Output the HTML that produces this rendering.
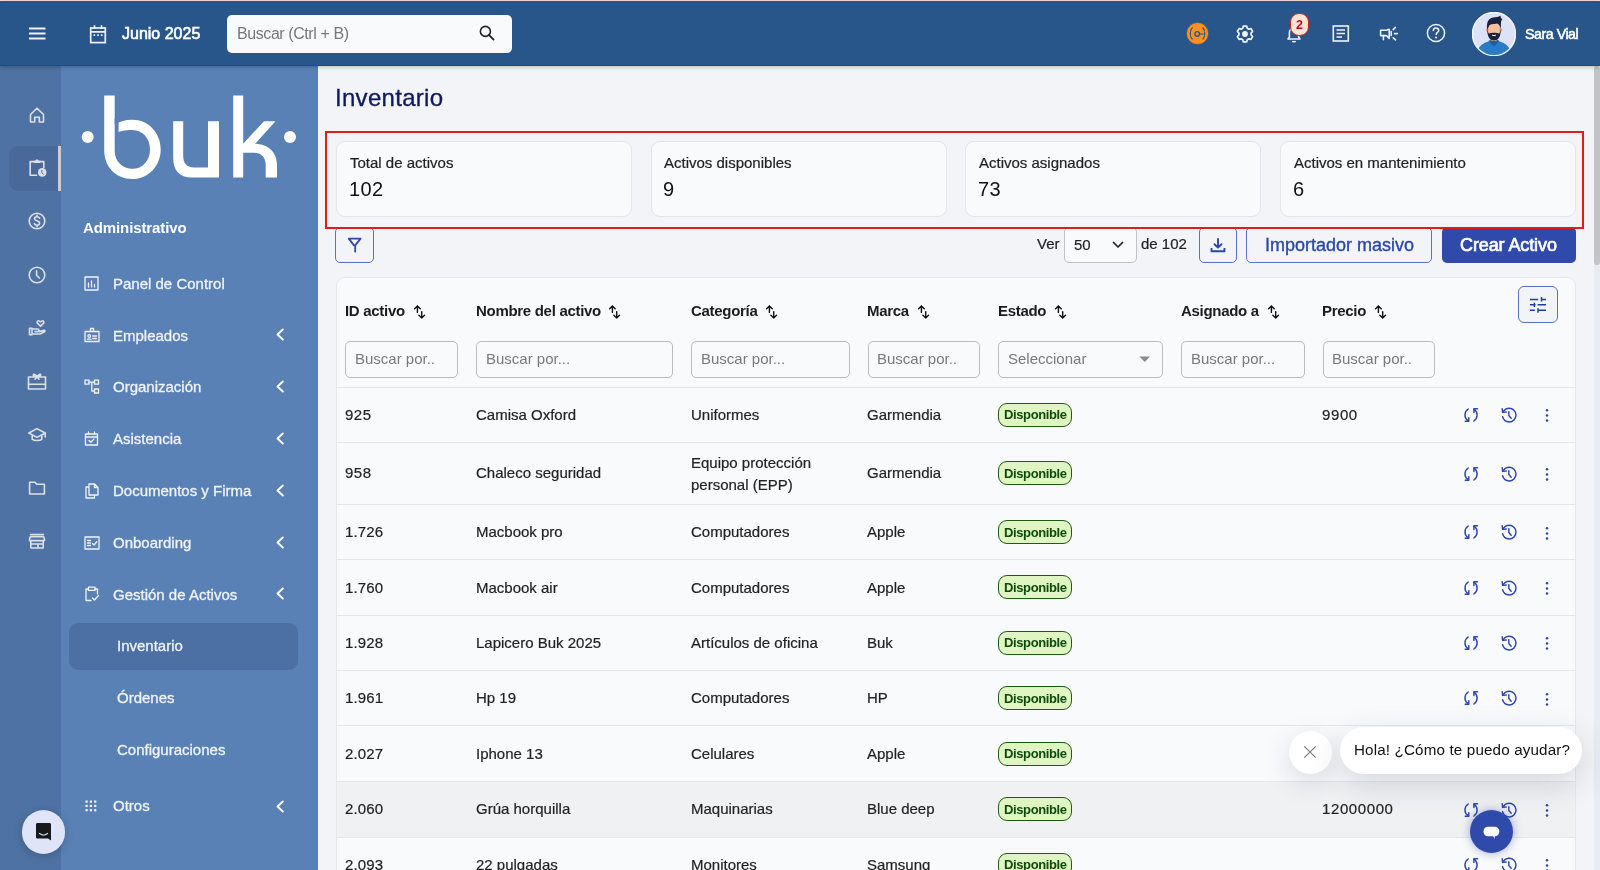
<!DOCTYPE html><html lang="es"><head><meta charset="utf-8"><title>Inventario</title><style>
*{margin:0;padding:0;box-sizing:border-box}
html,body{width:1600px;height:870px;overflow:hidden;background:#f3f4f7;font-family:"Liberation Sans",sans-serif;-webkit-font-smoothing:antialiased}
.a{position:absolute}
.t{position:absolute;line-height:1;white-space:nowrap;will-change:transform}
.d{-webkit-text-stroke:0.2px #222}
</style></head><body>
<div class="a" style="left:318.00px;top:65.00px;width:1276.00px;height:805.00px;background:#f3f4f7"></div>
<div class="a" style="left:1594.00px;top:65.00px;width:6.00px;height:805.00px;background:#e9ebf3"></div>
<div class="a" style="left:1594.00px;top:66.00px;width:6.00px;height:199.00px;background:#c3c4c8;border-radius:3px"></div>
<div class="a" style="left:0.00px;top:65.00px;width:61.00px;height:805.00px;background:#4e72a3"></div>
<div class="a" style="left:61.00px;top:65.00px;width:257.00px;height:805.00px;background:#5981b6"></div>
<div class="a" style="left:9.00px;top:146.00px;width:49.00px;height:44.80px;background:#48699a;border-radius:9px 0 0 9px"></div>
<div class="a" style="left:57.80px;top:146.00px;width:3.20px;height:44.80px;background:#cbcdd2"></div>
<svg class="a" style="left:27.00px;top:105.00px;overflow:visible" width="20" height="20" viewBox="0 0 20 20"><path fill="none" stroke="#dde0e7" stroke-width="1.6" stroke-linecap="round" stroke-linejoin="round" d="M3.5 9.5 L10 3.2 L16.5 9.5 V17 H12.3 V12.2 H7.7 V17 H3.5 Z"/></svg>
<svg class="a" style="left:27.00px;top:158.00px;overflow:visible" width="20" height="20" viewBox="0 0 20 20"><path fill="none" stroke="#dde0e7" stroke-width="1.6" stroke-linecap="round" stroke-linejoin="round" d="M9.6 17.2 H3.2 V3.6 H6.8 M13.4 3.6 H16.8 V9.4" stroke-linecap="butt" stroke-linejoin="miter"/><path d="M6.8 2.6 H8.6 C8.8 1.2 11.2 1.2 11.4 2.6 H13.4 V5 H6.8 Z" fill="#dde0e7"/><circle cx="15.2" cy="14.4" r="4.3" fill="#dde0e7"/><path d="M14.9 11.9 V14.6 L16.4 16.4" stroke="#4a6a98" stroke-width="1" fill="none"/></svg>
<svg class="a" style="left:27.00px;top:211.00px;overflow:visible" width="20" height="20" viewBox="0 0 20 20"><circle cx="10" cy="10" r="7.8" fill="none" stroke="#dde0e7" stroke-width="1.6" stroke-linecap="round" stroke-linejoin="round"/><path fill="none" stroke="#dde0e7" stroke-width="1.6" stroke-linecap="round" stroke-linejoin="round" d="M12.6 7.2 C12 6 10.9 5.8 10 5.8 C8.6 5.8 7.5 6.6 7.5 7.8 C7.5 10.3 12.6 9.4 12.6 12.1 C12.6 13.4 11.4 14.2 10 14.2 C8.8 14.2 7.8 13.8 7.3 12.7 M10 4.3 V5.8 M10 14.2 V15.7"/></svg>
<svg class="a" style="left:27.00px;top:264.60px;overflow:visible" width="20" height="20" viewBox="0 0 20 20"><circle cx="10" cy="10" r="7.8" fill="none" stroke="#dde0e7" stroke-width="1.6" stroke-linecap="round" stroke-linejoin="round"/><path fill="none" stroke="#dde0e7" stroke-width="1.6" stroke-linecap="round" stroke-linejoin="round" d="M9.6 5.8 V10.3 L12.4 13"/></svg>
<svg class="a" style="left:27.00px;top:318.40px;overflow:visible" width="20" height="20" viewBox="0 0 20 20"><path fill="none" stroke="#dde0e7" stroke-width="1.6" stroke-linecap="round" stroke-linejoin="round" d="M13.5 8.2 L10.6 5.4 C9.6 4.4 10.1 2.7 11.5 2.7 C12.4 2.7 13 3.4 13.5 4 C14 3.4 14.6 2.7 15.5 2.7 C16.9 2.7 17.4 4.4 16.4 5.4 Z"/><path fill="none" stroke="#dde0e7" stroke-width="1.6" stroke-linecap="round" stroke-linejoin="round" d="M2.5 10.2 H5 V16.8 H2.5 Z M5 11 H10.5 C11.5 11 12 11.6 12 12.4 C12 13.2 11.5 13.6 10.5 13.6 H8 M5 16 H13 L17.6 13.8 C18.2 13.3 17.9 12.3 17 12.4 L12 13.6"/></svg>
<svg class="a" style="left:27.00px;top:370.70px;overflow:visible" width="20" height="20" viewBox="0 0 20 20"><rect x="1.5" y="6" width="17" height="12" fill="none" stroke="#dde0e7" stroke-width="1.6" stroke-linecap="round" stroke-linejoin="round"/><path fill="none" stroke="#dde0e7" stroke-width="1.6" stroke-linecap="round" stroke-linejoin="round" d="M1.5 13.2 H18.5 M10 6 C8.5 3.2 6.5 2.6 6.3 4 C6.2 5 8 5.8 10 6 C11.5 3.2 13.5 2.6 13.7 4 C13.8 5 12 5.8 10 6 M10 6 L8 8.2 M10 6 L12 8.2"/></svg>
<svg class="a" style="left:27.00px;top:424.50px;overflow:visible" width="20" height="20" viewBox="0 0 20 20"><path fill="none" stroke="#dde0e7" stroke-width="1.6" stroke-linecap="round" stroke-linejoin="round" d="M1.8 8 L10 3.6 L18.2 8 L10 12.4 Z M5.2 10 V14.2 C6.8 16 13.2 16 14.8 14.2 V10 M18.2 8 V12"/></svg>
<svg class="a" style="left:27.00px;top:477.70px;overflow:visible" width="20" height="20" viewBox="0 0 20 20"><path fill="none" stroke="#dde0e7" stroke-width="1.6" stroke-linecap="round" stroke-linejoin="round" d="M2.6 4.2 H8 L9.8 6.2 H17.4 V16 H2.6 Z"/></svg>
<svg class="a" style="left:27.00px;top:530.60px;overflow:visible" width="20" height="20" viewBox="0 0 20 20"><path fill="none" stroke="#dde0e7" stroke-width="1.6" stroke-linecap="round" stroke-linejoin="round" d="M3.5 3.5 H16.5 M2.5 8 L3.5 5.6 H16.5 L17.5 8 V9.6 H2.5 Z M3.8 9.6 V17 H16.2 V9.6 M3.8 13 H11 V17 M11 13 H16.2"/></svg>
<svg class="a" style="left:70.00px;top:80.00px;" width="240" height="110" viewBox="0 0 240 110">
<circle cx="17.7" cy="57" r="6" fill="#fff"/>
<circle cx="220" cy="57" r="6" fill="#fff"/>
<path d="M34.2 15.5 H44.7 V44.5 C49.5 41.2 55.5 39.7 62.4 39.7 C78.5 39.7 90.7 53 90.7 69.4 C90.7 85.8 78.5 99 62.4 99 C46 99 34.2 87 34.2 70 Z" fill="#fff"/>
<path d="M44.7 53.8 C48.5 51.2 55 50 62.4 50 C72.5 50 80 58.5 80 69.4 C80 80.3 72.5 88.8 62.4 88.8 C52.5 88.8 44.7 81.5 44.7 71 Z" fill="#5981b6"/>
<path d="M44.7 38 H48.6 V53.8 H44.7 Z" fill="#5981b6"/>
<path d="M103.2 41.2 H113.2 V76 C113.2 83 116.5 87.4 124 87.4 H138 V41.2 H149 V97.5 H122 C109 97.5 103.2 90 103.2 78 Z" fill="#fff"/>
<rect x="163.2" y="15.5" width="10" height="82" fill="#fff"/>
<path d="M173.2 63.7 L194 41.2 H205.5 L184.5 64.5 L173.2 72.7 Z" fill="#fff"/>
<path d="M173.2 63.7 H184 C198 63.7 207 72 207 85 V97.5 H195.7 V85 C195.7 77 191 72.7 184 72.7 H173.2 Z" fill="#fff"/>
</svg>
<div class="t " style="left:82.62px;top:219.70px;font-size:15px;font-weight:700;color:#fff;letter-spacing:-0.1px;">Administrativo</div>
<svg class="a" style="left:84.00px;top:275.50px;overflow:visible" width="16" height="16" viewBox="0 0 16 16"><rect x="1" y="1" width="13" height="13" fill="none" stroke="#f2f4f8" stroke-width="1.3" stroke-linejoin="round" stroke-linecap="round"/><path fill="none" stroke="#f2f4f8" stroke-width="1.3" stroke-linejoin="round" stroke-linecap="round" d="M4.5 11 V7 M7.5 11 V5 M10.5 11 V8.5"/></svg>
<div class="t " style="left:113.22px;top:275.80px;font-size:15px;color:#f1f3f7;-webkit-text-stroke:0.3px #f1f3f7;">Panel de Control</div>
<svg class="a" style="left:84.00px;top:327.30px;overflow:visible" width="16" height="16" viewBox="0 0 16 16"><rect x="1" y="4.5" width="14" height="10" fill="none" stroke="#f2f4f8" stroke-width="1.3" stroke-linejoin="round" stroke-linecap="round"/><path fill="none" stroke="#f2f4f8" stroke-width="1.3" stroke-linejoin="round" stroke-linecap="round" d="M6.5 4.5 V1.5 H9.5 V4.5 M3.5 12.2 H7 M8.8 9 H12.5 M8.8 11.5 H12.5"/><circle cx="5.2" cy="9" r="1.3" fill="none" stroke="#f2f4f8" stroke-width="1.3" stroke-linejoin="round" stroke-linecap="round"/></svg>
<div class="t " style="left:113.22px;top:327.60px;font-size:15px;color:#f1f3f7;-webkit-text-stroke:0.3px #f1f3f7;">Empleados</div>
<svg class="a" style="left:275.00px;top:328.30px;" width="10" height="13" viewBox="0 0 10 13"><path d="M7.8 1.5 L2.5 6.5 L7.8 11.5" fill="none" stroke="#fff" stroke-width="1.9" stroke-linecap="round" stroke-linejoin="round"/></svg>
<svg class="a" style="left:84.00px;top:379.10px;overflow:visible" width="16" height="16" viewBox="0 0 16 16"><rect x="1" y="1.2" width="4" height="4" fill="none" stroke="#f2f4f8" stroke-width="1.3" stroke-linejoin="round" stroke-linecap="round"/><rect x="10.5" y="1.2" width="4" height="4" fill="none" stroke="#f2f4f8" stroke-width="1.3" stroke-linejoin="round" stroke-linecap="round"/><rect x="10.5" y="10" width="4" height="4" fill="none" stroke="#f2f4f8" stroke-width="1.3" stroke-linejoin="round" stroke-linecap="round"/><path fill="none" stroke="#f2f4f8" stroke-width="1.3" stroke-linejoin="round" stroke-linecap="round" d="M5 3.2 H10.5 M7.8 3.2 V12 H10.5"/></svg>
<div class="t " style="left:113.22px;top:379.40px;font-size:15px;color:#f1f3f7;-webkit-text-stroke:0.3px #f1f3f7;">Organización</div>
<svg class="a" style="left:275.00px;top:380.10px;" width="10" height="13" viewBox="0 0 10 13"><path d="M7.8 1.5 L2.5 6.5 L7.8 11.5" fill="none" stroke="#fff" stroke-width="1.9" stroke-linecap="round" stroke-linejoin="round"/></svg>
<svg class="a" style="left:84.00px;top:430.90px;overflow:visible" width="16" height="16" viewBox="0 0 16 16"><rect x="1.5" y="3" width="12" height="11" fill="none" stroke="#f2f4f8" stroke-width="1.3" stroke-linejoin="round" stroke-linecap="round"/><path fill="none" stroke="#f2f4f8" stroke-width="1.3" stroke-linejoin="round" stroke-linecap="round" d="M1.5 6 H13.5 M4.5 1 V3 M10.5 1 V3 M5 9.5 L6.8 11.2 L10 8"/></svg>
<div class="t " style="left:113.22px;top:431.20px;font-size:15px;color:#f1f3f7;-webkit-text-stroke:0.3px #f1f3f7;">Asistencia</div>
<svg class="a" style="left:275.00px;top:431.90px;" width="10" height="13" viewBox="0 0 10 13"><path d="M7.8 1.5 L2.5 6.5 L7.8 11.5" fill="none" stroke="#fff" stroke-width="1.9" stroke-linecap="round" stroke-linejoin="round"/></svg>
<svg class="a" style="left:84.00px;top:482.70px;overflow:visible" width="16" height="16" viewBox="0 0 16 16"><path fill="none" stroke="#f2f4f8" stroke-width="1.3" stroke-linejoin="round" stroke-linecap="round" d="M5 1 H10.5 L14 4.5 V12 H5 Z M10.5 1 V4.5 H14 M5 4 H2 V15 H10.5 V12"/></svg>
<div class="t " style="left:113.22px;top:483.00px;font-size:15px;color:#f1f3f7;-webkit-text-stroke:0.3px #f1f3f7;">Documentos y Firma</div>
<svg class="a" style="left:275.00px;top:483.70px;" width="10" height="13" viewBox="0 0 10 13"><path d="M7.8 1.5 L2.5 6.5 L7.8 11.5" fill="none" stroke="#fff" stroke-width="1.9" stroke-linecap="round" stroke-linejoin="round"/></svg>
<svg class="a" style="left:84.00px;top:534.50px;overflow:visible" width="16" height="16" viewBox="0 0 16 16"><rect x="1" y="2" width="14" height="12" fill="none" stroke="#f2f4f8" stroke-width="1.3" stroke-linejoin="round" stroke-linecap="round"/><path fill="none" stroke="#f2f4f8" stroke-width="1.3" stroke-linejoin="round" stroke-linecap="round" d="M3.5 5.5 H6.5 M3.5 8 H6.5 M3.5 10.5 H6.5 M8.5 8.5 L10 10 L12.8 6.8"/></svg>
<div class="t " style="left:113.22px;top:534.80px;font-size:15px;color:#f1f3f7;-webkit-text-stroke:0.3px #f1f3f7;">Onboarding</div>
<svg class="a" style="left:275.00px;top:535.50px;" width="10" height="13" viewBox="0 0 10 13"><path d="M7.8 1.5 L2.5 6.5 L7.8 11.5" fill="none" stroke="#fff" stroke-width="1.9" stroke-linecap="round" stroke-linejoin="round"/></svg>
<svg class="a" style="left:84.00px;top:586.30px;overflow:visible" width="16" height="16" viewBox="0 0 16 16"><path fill="none" stroke="#f2f4f8" stroke-width="1.3" stroke-linejoin="round" stroke-linecap="round" d="M4.5 3 H2 V14.5 H7 M11 3 H13.5 V8"/><rect x="4.5" y="1.2" width="6.5" height="3.2" fill="none" stroke="#f2f4f8" stroke-width="1.3" stroke-linejoin="round" stroke-linecap="round"/><path fill="none" stroke="#f2f4f8" stroke-width="1.3" stroke-linejoin="round" stroke-linecap="round" d="M8.5 12 L10.5 14 L14.5 9.5"/></svg>
<div class="t " style="left:113.22px;top:586.60px;font-size:15px;color:#f1f3f7;-webkit-text-stroke:0.3px #f1f3f7;">Gestión de Activos</div>
<svg class="a" style="left:275.00px;top:587.30px;" width="10" height="13" viewBox="0 0 10 13"><path d="M7.8 1.5 L2.5 6.5 L7.8 11.5" fill="none" stroke="#fff" stroke-width="1.9" stroke-linecap="round" stroke-linejoin="round"/></svg>
<div class="a" style="left:69.20px;top:623.00px;width:228.50px;height:47.00px;background:#4c70a4;border-radius:9px"></div>
<div class="t " style="left:117.33px;top:638.30px;font-size:15px;color:#f1f3f7;-webkit-text-stroke:0.3px #f1f3f7;">Inventario</div>
<div class="t " style="left:117.33px;top:690.10px;font-size:15px;color:#f1f3f7;-webkit-text-stroke:0.3px #f1f3f7;">Órdenes</div>
<div class="t " style="left:117.33px;top:741.90px;font-size:15px;color:#f1f3f7;-webkit-text-stroke:0.3px #f1f3f7;">Configuraciones</div>
<svg class="a" style="left:85.00px;top:800.00px;" width="13" height="13" viewBox="0 0 13 13"><rect x="0.5" y="0.5" width="2.2" height="2.2" fill="#f2f4f8"/><rect x="0.5" y="4.8" width="2.2" height="2.2" fill="#f2f4f8"/><rect x="0.5" y="9.1" width="2.2" height="2.2" fill="#f2f4f8"/><rect x="4.8" y="0.5" width="2.2" height="2.2" fill="#f2f4f8"/><rect x="4.8" y="4.8" width="2.2" height="2.2" fill="#f2f4f8"/><rect x="4.8" y="9.1" width="2.2" height="2.2" fill="#f2f4f8"/><rect x="9.1" y="0.5" width="2.2" height="2.2" fill="#f2f4f8"/><rect x="9.1" y="4.8" width="2.2" height="2.2" fill="#f2f4f8"/><rect x="9.1" y="9.1" width="2.2" height="2.2" fill="#f2f4f8"/></svg>
<div class="t " style="left:113.22px;top:798.30px;font-size:15px;color:#f1f3f7;-webkit-text-stroke:0.3px #f1f3f7;">Otros</div>
<svg class="a" style="left:275.00px;top:799.50px;" width="10" height="13" viewBox="0 0 10 13"><path d="M7.8 1.5 L2.5 6.5 L7.8 11.5" fill="none" stroke="#fff" stroke-width="1.9" stroke-linecap="round" stroke-linejoin="round"/></svg>
<div class="a" style="left:21.70px;top:810.00px;width:43.80px;height:44.00px;background:#dfe4f8;border-radius:50%;box-shadow:0 2px 10px rgba(0,0,0,0.18)"></div>
<svg class="a" style="left:35.00px;top:822.00px;" width="18" height="20" viewBox="0 0 18 20"><path d="M2.5 1 H14.5 C15.4 1 16 1.6 16 2.5 V18.5 L13 16.5 H2.5 C1.6 16.5 1 15.9 1 15 V2.5 C1 1.6 1.6 1 2.5 1 Z" fill="#17181c"/><path d="M4.5 11.5 C7 13.5 10 13.5 12.5 11.5" fill="none" stroke="#c9cbd3" stroke-width="1.4" stroke-linecap="round"/></svg>
<div class="a" style="left:0.00px;top:0.00px;width:1600.00px;height:1.20px;background:#f8dfe0"></div>
<div class="a" style="left:0.00px;top:1.00px;width:1600.00px;height:64.50px;background:#28558a;border-bottom:1px solid #1f4a84;box-shadow:0 1px 4px rgba(0,0,0,0.25)"></div>
<div class="a" style="left:0.00px;top:2.00px;width:1600.00px;height:1.00px;background:#205189"></div>
<svg class="a" style="left:29.00px;top:27.00px;" width="17" height="13" viewBox="0 0 17 13"><rect x="0" y="0.5" width="16.5" height="2" fill="#f0f2f6"/><rect x="0" y="5.5" width="16.5" height="2" fill="#f0f2f6"/><rect x="0" y="10.5" width="16.5" height="2" fill="#f0f2f6"/></svg>
<svg class="a" style="left:89.00px;top:24.00px;" width="19" height="20" viewBox="0 0 19 20"><rect x="1.7" y="4" width="14.6" height="14.6" fill="none" stroke="#f0f2f6" stroke-width="1.7"/><path d="M1.7 7.8 H16.3 M5.5 1.3 V5 M12.5 1.3 V5" stroke="#f0f2f6" stroke-width="1.7"/><rect x="4.5" y="10.3" width="1.7" height="1.7" fill="#f0f2f6"/><rect x="8.2" y="10.3" width="1.7" height="1.7" fill="#f0f2f6"/><rect x="11.9" y="10.3" width="1.7" height="1.7" fill="#f0f2f6"/></svg>
<div class="t " style="left:121.80px;top:25.75px;font-size:16px;color:#fff;letter-spacing:0px;-webkit-text-stroke:0.6px #fff;">Junio 2025</div>
<div class="a" style="left:227.00px;top:15.00px;width:285.00px;height:37.50px;background:#f9fafc;border-radius:5px"></div>
<div class="t " style="left:236.90px;top:26.15px;font-size:16px;color:#777;letter-spacing:-0.42px;">Buscar (Ctrl + B)</div>
<svg class="a" style="left:478.00px;top:24.00px;" width="18" height="18" viewBox="0 0 18 18"><circle cx="7.4" cy="7.4" r="5" fill="none" stroke="#222" stroke-width="1.6"/><path d="M11.1 11.1 L15.6 15.6" stroke="#222" stroke-width="1.8" stroke-linecap="round"/></svg>
<svg class="a" style="left:1185.50px;top:21.50px;" width="23" height="23" viewBox="0 0 23 23"><circle cx="11.5" cy="11.5" r="11" fill="#f7921e" stroke="#1f4f88" stroke-width="0.6"/><path d="M6.3 6 C3.6 8.6 3.6 14.4 6.3 17 M16.9 6 C19.4 8.6 19.4 14.4 16.9 17" fill="none" stroke="#255289" stroke-width="1.1" stroke-linecap="round" stroke-dasharray="3.2 1.2"/><circle cx="11.2" cy="12" r="2.3" fill="none" stroke="#255289" stroke-width="1.2"/><path d="M13.5 12 H17.6" stroke="#255289" stroke-width="1.1"/></svg>
<svg class="a" style="left:1235.00px;top:24.00px;" width="20" height="20" viewBox="0 0 20 20"><path d="M7.71 4.34 L8.34 2.17 L11.66 2.17 L12.29 4.34 L13.76 5.19 L15.95 4.65 L17.61 7.53 L16.04 9.15 L16.04 10.85 L17.61 12.47 L15.95 15.35 L13.76 14.81 L12.29 15.66 L11.66 17.83 L8.34 17.83 L7.71 15.66 L6.24 14.81 L4.05 15.35 L2.39 12.47 L3.96 10.85 L3.96 9.15 L2.39 7.53 L4.05 4.65 L6.24 5.19 Z" fill="none" stroke="#f0f2f6" stroke-width="1.7" stroke-linejoin="round"/><circle cx="10" cy="10" r="2.9" fill="#f0f2f6"/></svg>
<svg class="a" style="left:1284.00px;top:24.00px;" width="20" height="20" viewBox="0 0 20 20"><path d="M4 15 H16 L14.6 13 V8.6 C14.6 5.9 12.6 4 10 4 C7.4 4 5.4 5.9 5.4 8.6 V13 Z" fill="none" stroke="#f0f2f6" stroke-width="1.6" stroke-linejoin="round"/><path d="M8.5 17 C8.8 18 11.2 18 11.5 17" fill="none" stroke="#f0f2f6" stroke-width="1.6"/></svg>
<div class="a" style="left:1289.50px;top:12.50px;width:19.00px;height:23.50px;background:#fde4d4;border:1.2px solid #c2232d;border-radius:9px"></div>
<div class="t " style="left:1295.99px;top:19.02px;font-size:12.5px;font-weight:700;color:#b0121c;">2</div>
<svg class="a" style="left:1332.00px;top:25.00px;" width="18" height="17" viewBox="0 0 18 17"><rect x="1.3" y="1" width="15" height="15" fill="none" stroke="#f0f2f6" stroke-width="1.6"/><path d="M4.5 5 H13 M4.5 8.5 H13 M4.5 12 H10" stroke="#f0f2f6" stroke-width="1.6"/></svg>
<svg class="a" style="left:1379.00px;top:25.00px;" width="20" height="17" viewBox="0 0 20 17"><path d="M1.6 5.2 H7.4 L10.2 4.2 V13.4 L7.4 10.6 H1.6 Z" fill="none" stroke="#f0f2f6" stroke-width="1.6" stroke-linejoin="round"/><path d="M4.4 10.6 V14.8 M12.2 6.6 V10.6 M14.2 4.6 L16.4 2.4 M15.4 8.6 H18.4 M14.2 12.8 L16.6 14.8" fill="none" stroke="#f0f2f6" stroke-width="1.6" stroke-linecap="round"/></svg>
<svg class="a" style="left:1426.00px;top:23.00px;" width="20" height="20" viewBox="0 0 20 20"><circle cx="10" cy="10" r="8.6" fill="none" stroke="#f0f2f6" stroke-width="1.5"/><path d="M7.3 7.6 C7.3 5.9 8.5 5 10 5 C11.6 5 12.7 6 12.7 7.4 C12.7 9.4 10.2 9.4 10.2 11.6" fill="none" stroke="#f0f2f6" stroke-width="1.5" stroke-linecap="round"/><circle cx="10.1" cy="14.4" r="1" fill="#f0f2f6"/></svg>
<svg class="a" style="left:1472.00px;top:12.00px;" width="44" height="44" viewBox="0 0 44 44">
<defs><clipPath id="avc"><circle cx="22" cy="22" r="21"/></clipPath></defs>
<circle cx="22" cy="22" r="21.5" fill="#dde3f7" stroke="#f3f4f8" stroke-width="1.5"/>
<g clip-path="url(#avc)">
<path d="M4 46 C5 34 11 31 18 29 H26 C33 31 39 34 40 46 Z" fill="#2a7cc6"/>
<path d="M16.5 29 L22 34.5 L27.5 29 L25 27.5 H19 Z" fill="#1f5f9c"/>
<rect x="19.5" y="24" width="5" height="5" fill="#f3b48f"/>
<ellipse cx="22" cy="17.5" rx="6.6" ry="8" fill="#f6c09c"/>
<circle cx="15.3" cy="18" r="1.7" fill="#ef9f7d"/>
<circle cx="28.7" cy="18" r="1.7" fill="#ef9f7d"/>
<path d="M15.2 17 C15.2 25.5 18 28.5 22 28.5 C26 28.5 28.8 25.5 28.8 17 L27.4 21.5 C25 20.5 19 20.5 16.6 21.5 Z" fill="#1b2240"/>
<path d="M15.2 18 C14 11 16.5 6 21 5.5 C24 5 26.5 5.5 28.5 3.5 C28.8 5.5 28.5 6.5 30.5 7 C29.5 8 29.5 9 29 10 C29 13 28.8 16 28.8 18 C28.3 14 27 12 25 11.5 C22 12.5 18 11.5 17 14 Z" fill="#1b2240"/>
<path d="M20 23 C21 23.8 23 23.8 24 23" fill="none" stroke="#fff" stroke-width="1"/>
</g>
</svg>
<div class="t " style="left:1524.64px;top:26.58px;font-size:14.2px;color:#fff;letter-spacing:-0.45px;-webkit-text-stroke:0.55px #fff;">Sara Vial</div>
<div class="t " style="left:335.40px;top:86.48px;font-size:24px;color:#101a5c;letter-spacing:0.3px;-webkit-text-stroke:0.35px #101a5c;">Inventario</div>
<div class="a" style="left:336.00px;top:141.00px;width:296.00px;height:76.00px;background:#f9fafc;border:1px solid #e3e5ea;border-radius:9px"></div>
<div class="t d" style="left:349.62px;top:154.70px;font-size:15px;color:#222;">Total de activos</div>
<div class="t " style="left:348.50px;top:178.87px;font-size:20px;color:#111;letter-spacing:0.35px;">102</div>
<div class="a" style="left:650.50px;top:141.00px;width:296.00px;height:76.00px;background:#f9fafc;border:1px solid #e3e5ea;border-radius:9px"></div>
<div class="t d" style="left:664.12px;top:154.70px;font-size:15px;color:#222;">Activos disponibles</div>
<div class="t " style="left:663.00px;top:178.87px;font-size:20px;color:#111;letter-spacing:0.35px;">9</div>
<div class="a" style="left:965.00px;top:141.00px;width:296.00px;height:76.00px;background:#f9fafc;border:1px solid #e3e5ea;border-radius:9px"></div>
<div class="t d" style="left:978.62px;top:154.70px;font-size:15px;color:#222;">Activos asignados</div>
<div class="t " style="left:977.50px;top:178.87px;font-size:20px;color:#111;letter-spacing:0.35px;">73</div>
<div class="a" style="left:1280.00px;top:141.00px;width:296.00px;height:76.00px;background:#f9fafc;border:1px solid #e3e5ea;border-radius:9px"></div>
<div class="t d" style="left:1293.62px;top:154.70px;font-size:15px;color:#222;">Activos en mantenimiento</div>
<div class="t " style="left:1292.50px;top:178.87px;font-size:20px;color:#111;letter-spacing:0.35px;">6</div>
<div class="a" style="left:335.20px;top:227.00px;width:38.80px;height:36.30px;border:1px solid #5a72c3;border-radius:5px"></div>
<svg class="a" style="left:347.00px;top:236.00px;" width="16" height="17" viewBox="0 0 16 17"><path d="M1.8 2.6 H13.6 L8.2 9.4 V15.6 M1.8 2.6 L7 9.4" fill="none" stroke="#2d47ab" stroke-width="1.75" stroke-linejoin="round" stroke-linecap="round"/></svg>
<div class="t d" style="left:1037.22px;top:236.30px;font-size:15px;color:#222;">Ver</div>
<div class="a" style="left:1064.40px;top:227.00px;width:72.60px;height:36.20px;background:#f9fafc;border:1px solid #bfc1c6;border-radius:5px"></div>
<div class="t d" style="left:1073.83px;top:236.50px;font-size:15px;color:#222;">50</div>
<svg class="a" style="left:1111.50px;top:241.00px;" width="12" height="8" viewBox="0 0 12 8"><path d="M1.5 1.5 L6 6 L10.5 1.5" fill="none" stroke="#222" stroke-width="1.7" stroke-linecap="round" stroke-linejoin="round"/></svg>
<div class="t d" style="left:1141.33px;top:236.30px;font-size:15px;color:#222;">de 102</div>
<div class="a" style="left:1198.50px;top:227.00px;width:38.90px;height:36.20px;border:1px solid #5a72c3;border-radius:5px"></div>
<svg class="a" style="left:1210.00px;top:238.00px;" width="16" height="15" viewBox="0 0 16 15"><path d="M8 1 V9.5 M4.5 6.2 L8 9.6 L11.5 6.2" fill="none" stroke="#2d47ab" stroke-width="1.9" stroke-linecap="round" stroke-linejoin="round"/><path d="M1.5 10 V13.2 H14.5 V10" fill="none" stroke="#2d47ab" stroke-width="1.9" stroke-linejoin="round"/></svg>
<div class="a" style="left:1246.40px;top:227.00px;width:185.40px;height:36.20px;border:1px solid #5a72c3;border-radius:5px"></div>
<div class="t " style="left:1265.35px;top:235.56px;font-size:18px;color:#2b46a9;letter-spacing:0px;-webkit-text-stroke:0.35px #2b46a9;">Importador masivo</div>
<div class="a" style="left:1441.60px;top:227.00px;width:134.40px;height:36.20px;background:#2f4aab;border-radius:5px"></div>
<div class="t " style="left:1460.15px;top:235.56px;font-size:18px;color:#fff;letter-spacing:-0.1px;-webkit-text-stroke:0.65px #fff;">Crear Activo</div>
<div class="a" style="left:325.00px;top:131.00px;width:1259.00px;height:97.50px;border:2.3px solid #e11d1a"></div>
<div class="a" style="left:335.50px;top:277.00px;width:1240.00px;height:623.00px;background:#f9fafc;border:1px solid #e5e7ec;border-radius:9px"></div>
<div class="t " style="left:345.12px;top:302.90px;font-size:15px;font-weight:700;color:#1c1c1c;letter-spacing:-0.3px;">ID activo</div>
<svg class="a" style="left:413.63px;top:304.50px;" width="12" height="14" viewBox="0 0 12 14"><path d="M3.4 7.4 V1 M0.6 3.8 L3.4 0.9 L6.2 3.8" fill="none" stroke="#111" stroke-width="1.4" stroke-linecap="round" stroke-linejoin="round"/><path d="M7.7 6.6 V13 M4.9 10.2 L7.7 13.1 L10.5 10.2" fill="none" stroke="#111" stroke-width="1.4" stroke-linecap="round" stroke-linejoin="round"/></svg>
<div class="t " style="left:475.62px;top:302.90px;font-size:15px;font-weight:700;color:#1c1c1c;letter-spacing:-0.3px;">Nombre del activo</div>
<svg class="a" style="left:609.25px;top:304.50px;" width="12" height="14" viewBox="0 0 12 14"><path d="M3.4 7.4 V1 M0.6 3.8 L3.4 0.9 L6.2 3.8" fill="none" stroke="#111" stroke-width="1.4" stroke-linecap="round" stroke-linejoin="round"/><path d="M7.7 6.6 V13 M4.9 10.2 L7.7 13.1 L10.5 10.2" fill="none" stroke="#111" stroke-width="1.4" stroke-linecap="round" stroke-linejoin="round"/></svg>
<div class="t " style="left:691.02px;top:302.90px;font-size:15px;font-weight:700;color:#1c1c1c;letter-spacing:-0.3px;">Categoría</div>
<svg class="a" style="left:766.19px;top:304.50px;" width="12" height="14" viewBox="0 0 12 14"><path d="M3.4 7.4 V1 M0.6 3.8 L3.4 0.9 L6.2 3.8" fill="none" stroke="#111" stroke-width="1.4" stroke-linecap="round" stroke-linejoin="round"/><path d="M7.7 6.6 V13 M4.9 10.2 L7.7 13.1 L10.5 10.2" fill="none" stroke="#111" stroke-width="1.4" stroke-linecap="round" stroke-linejoin="round"/></svg>
<div class="t " style="left:867.23px;top:302.90px;font-size:15px;font-weight:700;color:#1c1c1c;letter-spacing:-0.3px;">Marca</div>
<svg class="a" style="left:917.77px;top:304.50px;" width="12" height="14" viewBox="0 0 12 14"><path d="M3.4 7.4 V1 M0.6 3.8 L3.4 0.9 L6.2 3.8" fill="none" stroke="#111" stroke-width="1.4" stroke-linecap="round" stroke-linejoin="round"/><path d="M7.7 6.6 V13 M4.9 10.2 L7.7 13.1 L10.5 10.2" fill="none" stroke="#111" stroke-width="1.4" stroke-linecap="round" stroke-linejoin="round"/></svg>
<div class="t " style="left:998.02px;top:302.90px;font-size:15px;font-weight:700;color:#1c1c1c;letter-spacing:-0.3px;">Estado</div>
<svg class="a" style="left:1054.90px;top:304.50px;" width="12" height="14" viewBox="0 0 12 14"><path d="M3.4 7.4 V1 M0.6 3.8 L3.4 0.9 L6.2 3.8" fill="none" stroke="#111" stroke-width="1.4" stroke-linecap="round" stroke-linejoin="round"/><path d="M7.7 6.6 V13 M4.9 10.2 L7.7 13.1 L10.5 10.2" fill="none" stroke="#111" stroke-width="1.4" stroke-linecap="round" stroke-linejoin="round"/></svg>
<div class="t " style="left:1181.03px;top:302.90px;font-size:15px;font-weight:700;color:#1c1c1c;letter-spacing:-0.3px;">Asignado a</div>
<svg class="a" style="left:1267.53px;top:304.50px;" width="12" height="14" viewBox="0 0 12 14"><path d="M3.4 7.4 V1 M0.6 3.8 L3.4 0.9 L6.2 3.8" fill="none" stroke="#111" stroke-width="1.4" stroke-linecap="round" stroke-linejoin="round"/><path d="M7.7 6.6 V13 M4.9 10.2 L7.7 13.1 L10.5 10.2" fill="none" stroke="#111" stroke-width="1.4" stroke-linecap="round" stroke-linejoin="round"/></svg>
<div class="t " style="left:1322.42px;top:302.90px;font-size:15px;font-weight:700;color:#1c1c1c;letter-spacing:-0.3px;">Precio</div>
<svg class="a" style="left:1375.16px;top:304.50px;" width="12" height="14" viewBox="0 0 12 14"><path d="M3.4 7.4 V1 M0.6 3.8 L3.4 0.9 L6.2 3.8" fill="none" stroke="#111" stroke-width="1.4" stroke-linecap="round" stroke-linejoin="round"/><path d="M7.7 6.6 V13 M4.9 10.2 L7.7 13.1 L10.5 10.2" fill="none" stroke="#111" stroke-width="1.4" stroke-linecap="round" stroke-linejoin="round"/></svg>
<div class="a" style="left:1518.30px;top:286.00px;width:39.40px;height:37.10px;background:#f3f4f8;border:1.5px solid #5870c0;border-radius:6px"></div>
<svg class="a" style="left:1528.00px;top:295.00px;" width="20" height="20" viewBox="0 0 20 20"><path d="M2 4.4 H10.2 M13 4.4 H18 M13.5 2 V6.5 M2 9.8 H7.5 M9.6 9.8 H18 M6.4 7.7 V12 M2 15.2 H6.8 M10 15.2 H18 M10 13.2 V17.8" fill="none" stroke="#1d3ca8" stroke-width="1.5"/></svg>
<div class="a" style="left:345.30px;top:341.00px;width:112.40px;height:36.50px;background:#f9fafc;border:1px solid #b9bbc0;border-radius:5px"></div>
<div class="t " style="left:354.93px;top:351.00px;font-size:15px;color:#7a7a7a;">Buscar por..</div>
<div class="a" style="left:476.00px;top:341.00px;width:197.30px;height:36.50px;background:#f9fafc;border:1px solid #b9bbc0;border-radius:5px"></div>
<div class="t " style="left:485.62px;top:351.00px;font-size:15px;color:#7a7a7a;">Buscar por...</div>
<div class="a" style="left:691.40px;top:341.00px;width:158.20px;height:36.50px;background:#f9fafc;border:1px solid #b9bbc0;border-radius:5px"></div>
<div class="t " style="left:701.02px;top:351.00px;font-size:15px;color:#7a7a7a;">Buscar por...</div>
<div class="a" style="left:867.60px;top:341.00px;width:112.80px;height:36.50px;background:#f9fafc;border:1px solid #b9bbc0;border-radius:5px"></div>
<div class="t " style="left:877.23px;top:351.00px;font-size:15px;color:#7a7a7a;">Buscar por..</div>
<div class="a" style="left:998.40px;top:341.00px;width:164.60px;height:36.50px;background:#f9fafc;border:1px solid #b9bbc0;border-radius:5px"></div>
<div class="t " style="left:1008.02px;top:351.00px;font-size:15px;color:#7a7a7a;">Seleccionar</div>
<div class="a" style="left:1181.40px;top:341.00px;width:123.20px;height:36.50px;background:#f9fafc;border:1px solid #b9bbc0;border-radius:5px"></div>
<div class="t " style="left:1191.03px;top:351.00px;font-size:15px;color:#7a7a7a;">Buscar por...</div>
<div class="a" style="left:1322.80px;top:341.00px;width:112.40px;height:36.50px;background:#f9fafc;border:1px solid #b9bbc0;border-radius:5px"></div>
<div class="t " style="left:1332.42px;top:351.00px;font-size:15px;color:#7a7a7a;">Buscar por..</div>
<svg class="a" style="left:1138.50px;top:356.00px;" width="12" height="7" viewBox="0 0 12 7"><path d="M0.5 0.5 H11 L5.75 6 Z" fill="#8a8a8a"/></svg>
<div class="a" style="left:336.50px;top:386.50px;width:1238.00px;height:1.00px;background:#e5e7eb"></div>
<div class="a" style="left:336.50px;top:441.50px;width:1238.00px;height:1.00px;background:#e5e7eb"></div>
<div class="t d" style="left:344.93px;top:406.60px;font-size:15px;color:#222;letter-spacing:0.5px;">925</div>
<div class="t d" style="left:475.62px;top:406.60px;font-size:15px;color:#222;">Camisa Oxford</div>
<div class="t d" style="left:691.02px;top:406.60px;font-size:15px;color:#222;">Uniformes</div>
<div class="t d" style="left:867.23px;top:406.60px;font-size:15px;color:#222;">Garmendia</div>
<div class="t d" style="left:1322.42px;top:406.60px;font-size:15px;color:#222;letter-spacing:0.6px;">9900</div>
<div class="a" style="left:998.10px;top:402.50px;width:74.30px;height:24.00px;background:#dff6c2;border:1.3px solid #1d5b12;border-radius:9px"></div>
<div class="t " style="left:1003.88px;top:408.09px;font-size:13px;font-weight:700;color:#0e4a0b;letter-spacing:-0.38px;">Disponible</div>
<svg class="a" style="left:1462.80px;top:406.70px;" width="18" height="17" viewBox="0 0 18 17"><path d="M5.2 2 C3.2 3.3 2 5.6 2 8 C2 10.4 3.1 12.4 4.9 13.6" fill="none" stroke="#2d47ab" stroke-width="1.45" stroke-linecap="round"/><path d="M2.2 14.2 L5.8 14.2 L5.8 10.6" fill="none" stroke="#2d47ab" stroke-width="1.45" stroke-linecap="round" stroke-linejoin="round"/><path d="M10.9 14 C12.9 12.7 14.1 10.4 14.1 8 C14.1 5.6 13 3.6 11.2 2.4" fill="none" stroke="#2d47ab" stroke-width="1.45" stroke-linecap="round"/><path d="M14.5 1.8 L10.9 1.8 L10.9 5.4" fill="none" stroke="#2d47ab" stroke-width="1.45" stroke-linecap="round" stroke-linejoin="round"/></svg>
<svg class="a" style="left:1499.50px;top:406.70px;" width="18" height="17" viewBox="0 0 18 17"><path d="M3.3 4.6 C4.6 2.5 6.7 1.3 9.2 1.3 C12.9 1.3 16 4.4 16 8.1 C16 11.9 12.9 14.9 9.2 14.9 C6 14.9 3.4 12.8 2.6 9.8" fill="none" stroke="#2d47ab" stroke-width="1.45" stroke-linecap="round"/><path d="M2.2 1.8 L2.6 5.4 L6.2 5" fill="none" stroke="#2d47ab" stroke-width="1.45" stroke-linecap="round" stroke-linejoin="round"/><path d="M8.8 4.6 V8.6 L11.2 11.2" fill="none" stroke="#2d47ab" stroke-width="1.45" stroke-linecap="round" stroke-linejoin="round"/></svg>
<svg class="a" style="left:1543.50px;top:407.00px;" width="6" height="16" viewBox="0 0 6 16"><circle cx="3" cy="3.2" r="1.25" fill="#2d47ab"/><circle cx="3" cy="8.4" r="1.25" fill="#2d47ab"/><circle cx="3" cy="13.6" r="1.25" fill="#2d47ab"/></svg>
<div class="a" style="left:336.50px;top:504.10px;width:1238.00px;height:1.00px;background:#e5e7eb"></div>
<div class="t d" style="left:344.93px;top:465.40px;font-size:15px;color:#222;letter-spacing:0.5px;">958</div>
<div class="t d" style="left:475.62px;top:465.40px;font-size:15px;color:#222;">Chaleco seguridad</div>
<div class="t d" style="left:691.02px;top:455.30px;font-size:15px;color:#222;">Equipo protección</div>
<div class="t d" style="left:691.02px;top:476.50px;font-size:15px;color:#222;">personal (EPP)</div>
<div class="t d" style="left:867.23px;top:465.40px;font-size:15px;color:#222;">Garmendia</div>
<div class="a" style="left:998.10px;top:461.30px;width:74.30px;height:24.00px;background:#dff6c2;border:1.3px solid #1d5b12;border-radius:9px"></div>
<div class="t " style="left:1003.88px;top:466.89px;font-size:13px;font-weight:700;color:#0e4a0b;letter-spacing:-0.38px;">Disponible</div>
<svg class="a" style="left:1462.80px;top:465.50px;" width="18" height="17" viewBox="0 0 18 17"><path d="M5.2 2 C3.2 3.3 2 5.6 2 8 C2 10.4 3.1 12.4 4.9 13.6" fill="none" stroke="#2d47ab" stroke-width="1.45" stroke-linecap="round"/><path d="M2.2 14.2 L5.8 14.2 L5.8 10.6" fill="none" stroke="#2d47ab" stroke-width="1.45" stroke-linecap="round" stroke-linejoin="round"/><path d="M10.9 14 C12.9 12.7 14.1 10.4 14.1 8 C14.1 5.6 13 3.6 11.2 2.4" fill="none" stroke="#2d47ab" stroke-width="1.45" stroke-linecap="round"/><path d="M14.5 1.8 L10.9 1.8 L10.9 5.4" fill="none" stroke="#2d47ab" stroke-width="1.45" stroke-linecap="round" stroke-linejoin="round"/></svg>
<svg class="a" style="left:1499.50px;top:465.50px;" width="18" height="17" viewBox="0 0 18 17"><path d="M3.3 4.6 C4.6 2.5 6.7 1.3 9.2 1.3 C12.9 1.3 16 4.4 16 8.1 C16 11.9 12.9 14.9 9.2 14.9 C6 14.9 3.4 12.8 2.6 9.8" fill="none" stroke="#2d47ab" stroke-width="1.45" stroke-linecap="round"/><path d="M2.2 1.8 L2.6 5.4 L6.2 5" fill="none" stroke="#2d47ab" stroke-width="1.45" stroke-linecap="round" stroke-linejoin="round"/><path d="M8.8 4.6 V8.6 L11.2 11.2" fill="none" stroke="#2d47ab" stroke-width="1.45" stroke-linecap="round" stroke-linejoin="round"/></svg>
<svg class="a" style="left:1543.50px;top:465.80px;" width="6" height="16" viewBox="0 0 6 16"><circle cx="3" cy="3.2" r="1.25" fill="#2d47ab"/><circle cx="3" cy="8.4" r="1.25" fill="#2d47ab"/><circle cx="3" cy="13.6" r="1.25" fill="#2d47ab"/></svg>
<div class="a" style="left:336.50px;top:559.00px;width:1238.00px;height:1.00px;background:#e5e7eb"></div>
<div class="t d" style="left:344.93px;top:524.15px;font-size:15px;color:#222;letter-spacing:0.15px;">1.726</div>
<div class="t d" style="left:475.62px;top:524.15px;font-size:15px;color:#222;">Macbook pro</div>
<div class="t d" style="left:691.02px;top:524.15px;font-size:15px;color:#222;">Computadores</div>
<div class="t d" style="left:867.23px;top:524.15px;font-size:15px;color:#222;">Apple</div>
<div class="a" style="left:998.10px;top:520.05px;width:74.30px;height:24.00px;background:#dff6c2;border:1.3px solid #1d5b12;border-radius:9px"></div>
<div class="t " style="left:1003.88px;top:525.64px;font-size:13px;font-weight:700;color:#0e4a0b;letter-spacing:-0.38px;">Disponible</div>
<svg class="a" style="left:1462.80px;top:524.25px;" width="18" height="17" viewBox="0 0 18 17"><path d="M5.2 2 C3.2 3.3 2 5.6 2 8 C2 10.4 3.1 12.4 4.9 13.6" fill="none" stroke="#2d47ab" stroke-width="1.45" stroke-linecap="round"/><path d="M2.2 14.2 L5.8 14.2 L5.8 10.6" fill="none" stroke="#2d47ab" stroke-width="1.45" stroke-linecap="round" stroke-linejoin="round"/><path d="M10.9 14 C12.9 12.7 14.1 10.4 14.1 8 C14.1 5.6 13 3.6 11.2 2.4" fill="none" stroke="#2d47ab" stroke-width="1.45" stroke-linecap="round"/><path d="M14.5 1.8 L10.9 1.8 L10.9 5.4" fill="none" stroke="#2d47ab" stroke-width="1.45" stroke-linecap="round" stroke-linejoin="round"/></svg>
<svg class="a" style="left:1499.50px;top:524.25px;" width="18" height="17" viewBox="0 0 18 17"><path d="M3.3 4.6 C4.6 2.5 6.7 1.3 9.2 1.3 C12.9 1.3 16 4.4 16 8.1 C16 11.9 12.9 14.9 9.2 14.9 C6 14.9 3.4 12.8 2.6 9.8" fill="none" stroke="#2d47ab" stroke-width="1.45" stroke-linecap="round"/><path d="M2.2 1.8 L2.6 5.4 L6.2 5" fill="none" stroke="#2d47ab" stroke-width="1.45" stroke-linecap="round" stroke-linejoin="round"/><path d="M8.8 4.6 V8.6 L11.2 11.2" fill="none" stroke="#2d47ab" stroke-width="1.45" stroke-linecap="round" stroke-linejoin="round"/></svg>
<svg class="a" style="left:1543.50px;top:524.55px;" width="6" height="16" viewBox="0 0 6 16"><circle cx="3" cy="3.2" r="1.25" fill="#2d47ab"/><circle cx="3" cy="8.4" r="1.25" fill="#2d47ab"/><circle cx="3" cy="13.6" r="1.25" fill="#2d47ab"/></svg>
<div class="a" style="left:336.50px;top:614.80px;width:1238.00px;height:1.00px;background:#e5e7eb"></div>
<div class="t d" style="left:344.93px;top:579.50px;font-size:15px;color:#222;letter-spacing:0.15px;">1.760</div>
<div class="t d" style="left:475.62px;top:579.50px;font-size:15px;color:#222;">Macbook air</div>
<div class="t d" style="left:691.02px;top:579.50px;font-size:15px;color:#222;">Computadores</div>
<div class="t d" style="left:867.23px;top:579.50px;font-size:15px;color:#222;">Apple</div>
<div class="a" style="left:998.10px;top:575.40px;width:74.30px;height:24.00px;background:#dff6c2;border:1.3px solid #1d5b12;border-radius:9px"></div>
<div class="t " style="left:1003.88px;top:580.99px;font-size:13px;font-weight:700;color:#0e4a0b;letter-spacing:-0.38px;">Disponible</div>
<svg class="a" style="left:1462.80px;top:579.60px;" width="18" height="17" viewBox="0 0 18 17"><path d="M5.2 2 C3.2 3.3 2 5.6 2 8 C2 10.4 3.1 12.4 4.9 13.6" fill="none" stroke="#2d47ab" stroke-width="1.45" stroke-linecap="round"/><path d="M2.2 14.2 L5.8 14.2 L5.8 10.6" fill="none" stroke="#2d47ab" stroke-width="1.45" stroke-linecap="round" stroke-linejoin="round"/><path d="M10.9 14 C12.9 12.7 14.1 10.4 14.1 8 C14.1 5.6 13 3.6 11.2 2.4" fill="none" stroke="#2d47ab" stroke-width="1.45" stroke-linecap="round"/><path d="M14.5 1.8 L10.9 1.8 L10.9 5.4" fill="none" stroke="#2d47ab" stroke-width="1.45" stroke-linecap="round" stroke-linejoin="round"/></svg>
<svg class="a" style="left:1499.50px;top:579.60px;" width="18" height="17" viewBox="0 0 18 17"><path d="M3.3 4.6 C4.6 2.5 6.7 1.3 9.2 1.3 C12.9 1.3 16 4.4 16 8.1 C16 11.9 12.9 14.9 9.2 14.9 C6 14.9 3.4 12.8 2.6 9.8" fill="none" stroke="#2d47ab" stroke-width="1.45" stroke-linecap="round"/><path d="M2.2 1.8 L2.6 5.4 L6.2 5" fill="none" stroke="#2d47ab" stroke-width="1.45" stroke-linecap="round" stroke-linejoin="round"/><path d="M8.8 4.6 V8.6 L11.2 11.2" fill="none" stroke="#2d47ab" stroke-width="1.45" stroke-linecap="round" stroke-linejoin="round"/></svg>
<svg class="a" style="left:1543.50px;top:579.90px;" width="6" height="16" viewBox="0 0 6 16"><circle cx="3" cy="3.2" r="1.25" fill="#2d47ab"/><circle cx="3" cy="8.4" r="1.25" fill="#2d47ab"/><circle cx="3" cy="13.6" r="1.25" fill="#2d47ab"/></svg>
<div class="a" style="left:336.50px;top:669.70px;width:1238.00px;height:1.00px;background:#e5e7eb"></div>
<div class="t d" style="left:344.93px;top:634.85px;font-size:15px;color:#222;letter-spacing:0.15px;">1.928</div>
<div class="t d" style="left:475.62px;top:634.85px;font-size:15px;color:#222;">Lapicero Buk 2025</div>
<div class="t d" style="left:691.02px;top:634.85px;font-size:15px;color:#222;">Artículos de oficina</div>
<div class="t d" style="left:867.23px;top:634.85px;font-size:15px;color:#222;">Buk</div>
<div class="a" style="left:998.10px;top:630.75px;width:74.30px;height:24.00px;background:#dff6c2;border:1.3px solid #1d5b12;border-radius:9px"></div>
<div class="t " style="left:1003.88px;top:636.34px;font-size:13px;font-weight:700;color:#0e4a0b;letter-spacing:-0.38px;">Disponible</div>
<svg class="a" style="left:1462.80px;top:634.95px;" width="18" height="17" viewBox="0 0 18 17"><path d="M5.2 2 C3.2 3.3 2 5.6 2 8 C2 10.4 3.1 12.4 4.9 13.6" fill="none" stroke="#2d47ab" stroke-width="1.45" stroke-linecap="round"/><path d="M2.2 14.2 L5.8 14.2 L5.8 10.6" fill="none" stroke="#2d47ab" stroke-width="1.45" stroke-linecap="round" stroke-linejoin="round"/><path d="M10.9 14 C12.9 12.7 14.1 10.4 14.1 8 C14.1 5.6 13 3.6 11.2 2.4" fill="none" stroke="#2d47ab" stroke-width="1.45" stroke-linecap="round"/><path d="M14.5 1.8 L10.9 1.8 L10.9 5.4" fill="none" stroke="#2d47ab" stroke-width="1.45" stroke-linecap="round" stroke-linejoin="round"/></svg>
<svg class="a" style="left:1499.50px;top:634.95px;" width="18" height="17" viewBox="0 0 18 17"><path d="M3.3 4.6 C4.6 2.5 6.7 1.3 9.2 1.3 C12.9 1.3 16 4.4 16 8.1 C16 11.9 12.9 14.9 9.2 14.9 C6 14.9 3.4 12.8 2.6 9.8" fill="none" stroke="#2d47ab" stroke-width="1.45" stroke-linecap="round"/><path d="M2.2 1.8 L2.6 5.4 L6.2 5" fill="none" stroke="#2d47ab" stroke-width="1.45" stroke-linecap="round" stroke-linejoin="round"/><path d="M8.8 4.6 V8.6 L11.2 11.2" fill="none" stroke="#2d47ab" stroke-width="1.45" stroke-linecap="round" stroke-linejoin="round"/></svg>
<svg class="a" style="left:1543.50px;top:635.25px;" width="6" height="16" viewBox="0 0 6 16"><circle cx="3" cy="3.2" r="1.25" fill="#2d47ab"/><circle cx="3" cy="8.4" r="1.25" fill="#2d47ab"/><circle cx="3" cy="13.6" r="1.25" fill="#2d47ab"/></svg>
<div class="a" style="left:336.50px;top:725.40px;width:1238.00px;height:1.00px;background:#e5e7eb"></div>
<div class="t d" style="left:344.93px;top:690.15px;font-size:15px;color:#222;letter-spacing:0.15px;">1.961</div>
<div class="t d" style="left:475.62px;top:690.15px;font-size:15px;color:#222;">Hp 19</div>
<div class="t d" style="left:691.02px;top:690.15px;font-size:15px;color:#222;">Computadores</div>
<div class="t d" style="left:867.23px;top:690.15px;font-size:15px;color:#222;">HP</div>
<div class="a" style="left:998.10px;top:686.05px;width:74.30px;height:24.00px;background:#dff6c2;border:1.3px solid #1d5b12;border-radius:9px"></div>
<div class="t " style="left:1003.88px;top:691.64px;font-size:13px;font-weight:700;color:#0e4a0b;letter-spacing:-0.38px;">Disponible</div>
<svg class="a" style="left:1462.80px;top:690.25px;" width="18" height="17" viewBox="0 0 18 17"><path d="M5.2 2 C3.2 3.3 2 5.6 2 8 C2 10.4 3.1 12.4 4.9 13.6" fill="none" stroke="#2d47ab" stroke-width="1.45" stroke-linecap="round"/><path d="M2.2 14.2 L5.8 14.2 L5.8 10.6" fill="none" stroke="#2d47ab" stroke-width="1.45" stroke-linecap="round" stroke-linejoin="round"/><path d="M10.9 14 C12.9 12.7 14.1 10.4 14.1 8 C14.1 5.6 13 3.6 11.2 2.4" fill="none" stroke="#2d47ab" stroke-width="1.45" stroke-linecap="round"/><path d="M14.5 1.8 L10.9 1.8 L10.9 5.4" fill="none" stroke="#2d47ab" stroke-width="1.45" stroke-linecap="round" stroke-linejoin="round"/></svg>
<svg class="a" style="left:1499.50px;top:690.25px;" width="18" height="17" viewBox="0 0 18 17"><path d="M3.3 4.6 C4.6 2.5 6.7 1.3 9.2 1.3 C12.9 1.3 16 4.4 16 8.1 C16 11.9 12.9 14.9 9.2 14.9 C6 14.9 3.4 12.8 2.6 9.8" fill="none" stroke="#2d47ab" stroke-width="1.45" stroke-linecap="round"/><path d="M2.2 1.8 L2.6 5.4 L6.2 5" fill="none" stroke="#2d47ab" stroke-width="1.45" stroke-linecap="round" stroke-linejoin="round"/><path d="M8.8 4.6 V8.6 L11.2 11.2" fill="none" stroke="#2d47ab" stroke-width="1.45" stroke-linecap="round" stroke-linejoin="round"/></svg>
<svg class="a" style="left:1543.50px;top:690.55px;" width="6" height="16" viewBox="0 0 6 16"><circle cx="3" cy="3.2" r="1.25" fill="#2d47ab"/><circle cx="3" cy="8.4" r="1.25" fill="#2d47ab"/><circle cx="3" cy="13.6" r="1.25" fill="#2d47ab"/></svg>
<div class="a" style="left:336.50px;top:781.00px;width:1238.00px;height:1.00px;background:#e5e7eb"></div>
<div class="t d" style="left:344.93px;top:745.80px;font-size:15px;color:#222;letter-spacing:0.15px;">2.027</div>
<div class="t d" style="left:475.62px;top:745.80px;font-size:15px;color:#222;">Iphone 13</div>
<div class="t d" style="left:691.02px;top:745.80px;font-size:15px;color:#222;">Celulares</div>
<div class="t d" style="left:867.23px;top:745.80px;font-size:15px;color:#222;">Apple</div>
<div class="a" style="left:998.10px;top:741.70px;width:74.30px;height:24.00px;background:#dff6c2;border:1.3px solid #1d5b12;border-radius:9px"></div>
<div class="t " style="left:1003.88px;top:747.29px;font-size:13px;font-weight:700;color:#0e4a0b;letter-spacing:-0.38px;">Disponible</div>
<svg class="a" style="left:1462.80px;top:745.90px;" width="18" height="17" viewBox="0 0 18 17"><path d="M5.2 2 C3.2 3.3 2 5.6 2 8 C2 10.4 3.1 12.4 4.9 13.6" fill="none" stroke="#2d47ab" stroke-width="1.45" stroke-linecap="round"/><path d="M2.2 14.2 L5.8 14.2 L5.8 10.6" fill="none" stroke="#2d47ab" stroke-width="1.45" stroke-linecap="round" stroke-linejoin="round"/><path d="M10.9 14 C12.9 12.7 14.1 10.4 14.1 8 C14.1 5.6 13 3.6 11.2 2.4" fill="none" stroke="#2d47ab" stroke-width="1.45" stroke-linecap="round"/><path d="M14.5 1.8 L10.9 1.8 L10.9 5.4" fill="none" stroke="#2d47ab" stroke-width="1.45" stroke-linecap="round" stroke-linejoin="round"/></svg>
<svg class="a" style="left:1499.50px;top:745.90px;" width="18" height="17" viewBox="0 0 18 17"><path d="M3.3 4.6 C4.6 2.5 6.7 1.3 9.2 1.3 C12.9 1.3 16 4.4 16 8.1 C16 11.9 12.9 14.9 9.2 14.9 C6 14.9 3.4 12.8 2.6 9.8" fill="none" stroke="#2d47ab" stroke-width="1.45" stroke-linecap="round"/><path d="M2.2 1.8 L2.6 5.4 L6.2 5" fill="none" stroke="#2d47ab" stroke-width="1.45" stroke-linecap="round" stroke-linejoin="round"/><path d="M8.8 4.6 V8.6 L11.2 11.2" fill="none" stroke="#2d47ab" stroke-width="1.45" stroke-linecap="round" stroke-linejoin="round"/></svg>
<svg class="a" style="left:1543.50px;top:746.20px;" width="6" height="16" viewBox="0 0 6 16"><circle cx="3" cy="3.2" r="1.25" fill="#2d47ab"/><circle cx="3" cy="8.4" r="1.25" fill="#2d47ab"/><circle cx="3" cy="13.6" r="1.25" fill="#2d47ab"/></svg>
<div class="a" style="left:336.50px;top:782.00px;width:1238.00px;height:55.10px;background:#f0f1f3"></div>
<div class="a" style="left:336.50px;top:836.60px;width:1238.00px;height:1.00px;background:#e5e7eb"></div>
<div class="t d" style="left:344.93px;top:801.40px;font-size:15px;color:#222;letter-spacing:0.15px;">2.060</div>
<div class="t d" style="left:475.62px;top:801.40px;font-size:15px;color:#222;">Grúa horquilla</div>
<div class="t d" style="left:691.02px;top:801.40px;font-size:15px;color:#222;">Maquinarias</div>
<div class="t d" style="left:867.23px;top:801.40px;font-size:15px;color:#222;">Blue deep</div>
<div class="t d" style="left:1322.42px;top:801.40px;font-size:15px;color:#222;letter-spacing:0.6px;">12000000</div>
<div class="a" style="left:998.10px;top:797.30px;width:74.30px;height:24.00px;background:#dff6c2;border:1.3px solid #1d5b12;border-radius:9px"></div>
<div class="t " style="left:1003.88px;top:802.89px;font-size:13px;font-weight:700;color:#0e4a0b;letter-spacing:-0.38px;">Disponible</div>
<svg class="a" style="left:1462.80px;top:801.50px;" width="18" height="17" viewBox="0 0 18 17"><path d="M5.2 2 C3.2 3.3 2 5.6 2 8 C2 10.4 3.1 12.4 4.9 13.6" fill="none" stroke="#2d47ab" stroke-width="1.45" stroke-linecap="round"/><path d="M2.2 14.2 L5.8 14.2 L5.8 10.6" fill="none" stroke="#2d47ab" stroke-width="1.45" stroke-linecap="round" stroke-linejoin="round"/><path d="M10.9 14 C12.9 12.7 14.1 10.4 14.1 8 C14.1 5.6 13 3.6 11.2 2.4" fill="none" stroke="#2d47ab" stroke-width="1.45" stroke-linecap="round"/><path d="M14.5 1.8 L10.9 1.8 L10.9 5.4" fill="none" stroke="#2d47ab" stroke-width="1.45" stroke-linecap="round" stroke-linejoin="round"/></svg>
<svg class="a" style="left:1499.50px;top:801.50px;" width="18" height="17" viewBox="0 0 18 17"><path d="M3.3 4.6 C4.6 2.5 6.7 1.3 9.2 1.3 C12.9 1.3 16 4.4 16 8.1 C16 11.9 12.9 14.9 9.2 14.9 C6 14.9 3.4 12.8 2.6 9.8" fill="none" stroke="#2d47ab" stroke-width="1.45" stroke-linecap="round"/><path d="M2.2 1.8 L2.6 5.4 L6.2 5" fill="none" stroke="#2d47ab" stroke-width="1.45" stroke-linecap="round" stroke-linejoin="round"/><path d="M8.8 4.6 V8.6 L11.2 11.2" fill="none" stroke="#2d47ab" stroke-width="1.45" stroke-linecap="round" stroke-linejoin="round"/></svg>
<svg class="a" style="left:1543.50px;top:801.80px;" width="6" height="16" viewBox="0 0 6 16"><circle cx="3" cy="3.2" r="1.25" fill="#2d47ab"/><circle cx="3" cy="8.4" r="1.25" fill="#2d47ab"/><circle cx="3" cy="13.6" r="1.25" fill="#2d47ab"/></svg>
<div class="t d" style="left:344.93px;top:857.00px;font-size:15px;color:#222;letter-spacing:0.15px;">2.093</div>
<div class="t d" style="left:475.62px;top:857.00px;font-size:15px;color:#222;">22 pulgadas</div>
<div class="t d" style="left:691.02px;top:857.00px;font-size:15px;color:#222;">Monitores</div>
<div class="t d" style="left:867.23px;top:857.00px;font-size:15px;color:#222;">Samsung</div>
<div class="a" style="left:998.10px;top:852.90px;width:74.30px;height:24.00px;background:#dff6c2;border:1.3px solid #1d5b12;border-radius:9px"></div>
<div class="t " style="left:1003.88px;top:858.49px;font-size:13px;font-weight:700;color:#0e4a0b;letter-spacing:-0.38px;">Disponible</div>
<svg class="a" style="left:1462.80px;top:857.10px;" width="18" height="17" viewBox="0 0 18 17"><path d="M5.2 2 C3.2 3.3 2 5.6 2 8 C2 10.4 3.1 12.4 4.9 13.6" fill="none" stroke="#2d47ab" stroke-width="1.45" stroke-linecap="round"/><path d="M2.2 14.2 L5.8 14.2 L5.8 10.6" fill="none" stroke="#2d47ab" stroke-width="1.45" stroke-linecap="round" stroke-linejoin="round"/><path d="M10.9 14 C12.9 12.7 14.1 10.4 14.1 8 C14.1 5.6 13 3.6 11.2 2.4" fill="none" stroke="#2d47ab" stroke-width="1.45" stroke-linecap="round"/><path d="M14.5 1.8 L10.9 1.8 L10.9 5.4" fill="none" stroke="#2d47ab" stroke-width="1.45" stroke-linecap="round" stroke-linejoin="round"/></svg>
<svg class="a" style="left:1499.50px;top:857.10px;" width="18" height="17" viewBox="0 0 18 17"><path d="M3.3 4.6 C4.6 2.5 6.7 1.3 9.2 1.3 C12.9 1.3 16 4.4 16 8.1 C16 11.9 12.9 14.9 9.2 14.9 C6 14.9 3.4 12.8 2.6 9.8" fill="none" stroke="#2d47ab" stroke-width="1.45" stroke-linecap="round"/><path d="M2.2 1.8 L2.6 5.4 L6.2 5" fill="none" stroke="#2d47ab" stroke-width="1.45" stroke-linecap="round" stroke-linejoin="round"/><path d="M8.8 4.6 V8.6 L11.2 11.2" fill="none" stroke="#2d47ab" stroke-width="1.45" stroke-linecap="round" stroke-linejoin="round"/></svg>
<svg class="a" style="left:1543.50px;top:857.40px;" width="6" height="16" viewBox="0 0 6 16"><circle cx="3" cy="3.2" r="1.25" fill="#2d47ab"/><circle cx="3" cy="8.4" r="1.25" fill="#2d47ab"/><circle cx="3" cy="13.6" r="1.25" fill="#2d47ab"/></svg>
<div class="a" style="left:1288.50px;top:731.00px;width:43.00px;height:43.40px;background:#fff;border-radius:50%;box-shadow:0 8px 28px rgba(30,40,70,0.15)"></div>
<svg class="a" style="left:1302.00px;top:744.00px;" width="16" height="16" viewBox="0 0 16 16"><path d="M2.3 2.3 L13.7 13.7 M13.7 2.3 L2.3 13.7" stroke="#777" stroke-width="1.15"/></svg>
<div class="a" style="left:1340.40px;top:727.00px;width:242.00px;height:47.40px;background:#fff;border-radius:24px;box-shadow:0 10px 32px rgba(30,40,70,0.17)"></div>
<div class="t " style="left:1353.62px;top:742.43px;font-size:15.2px;color:#111;letter-spacing:0.15px;">Hola! ¿Cómo te puedo ayudar?</div>
<div class="a" style="left:1469.50px;top:810.20px;width:43.00px;height:43.00px;background:#2f4aab;border-radius:50%;box-shadow:0 0 10px rgba(47,74,171,0.45)"></div>
<svg class="a" style="left:1482.00px;top:825.00px;" width="19" height="16" viewBox="0 0 19 16"><rect x="1.5" y="1.8" width="15.8" height="9.5" rx="4.5" fill="#fff"/><path d="M10.5 10 L12.8 14 L12.6 10 Z" fill="#fff"/></svg>
</body></html>
